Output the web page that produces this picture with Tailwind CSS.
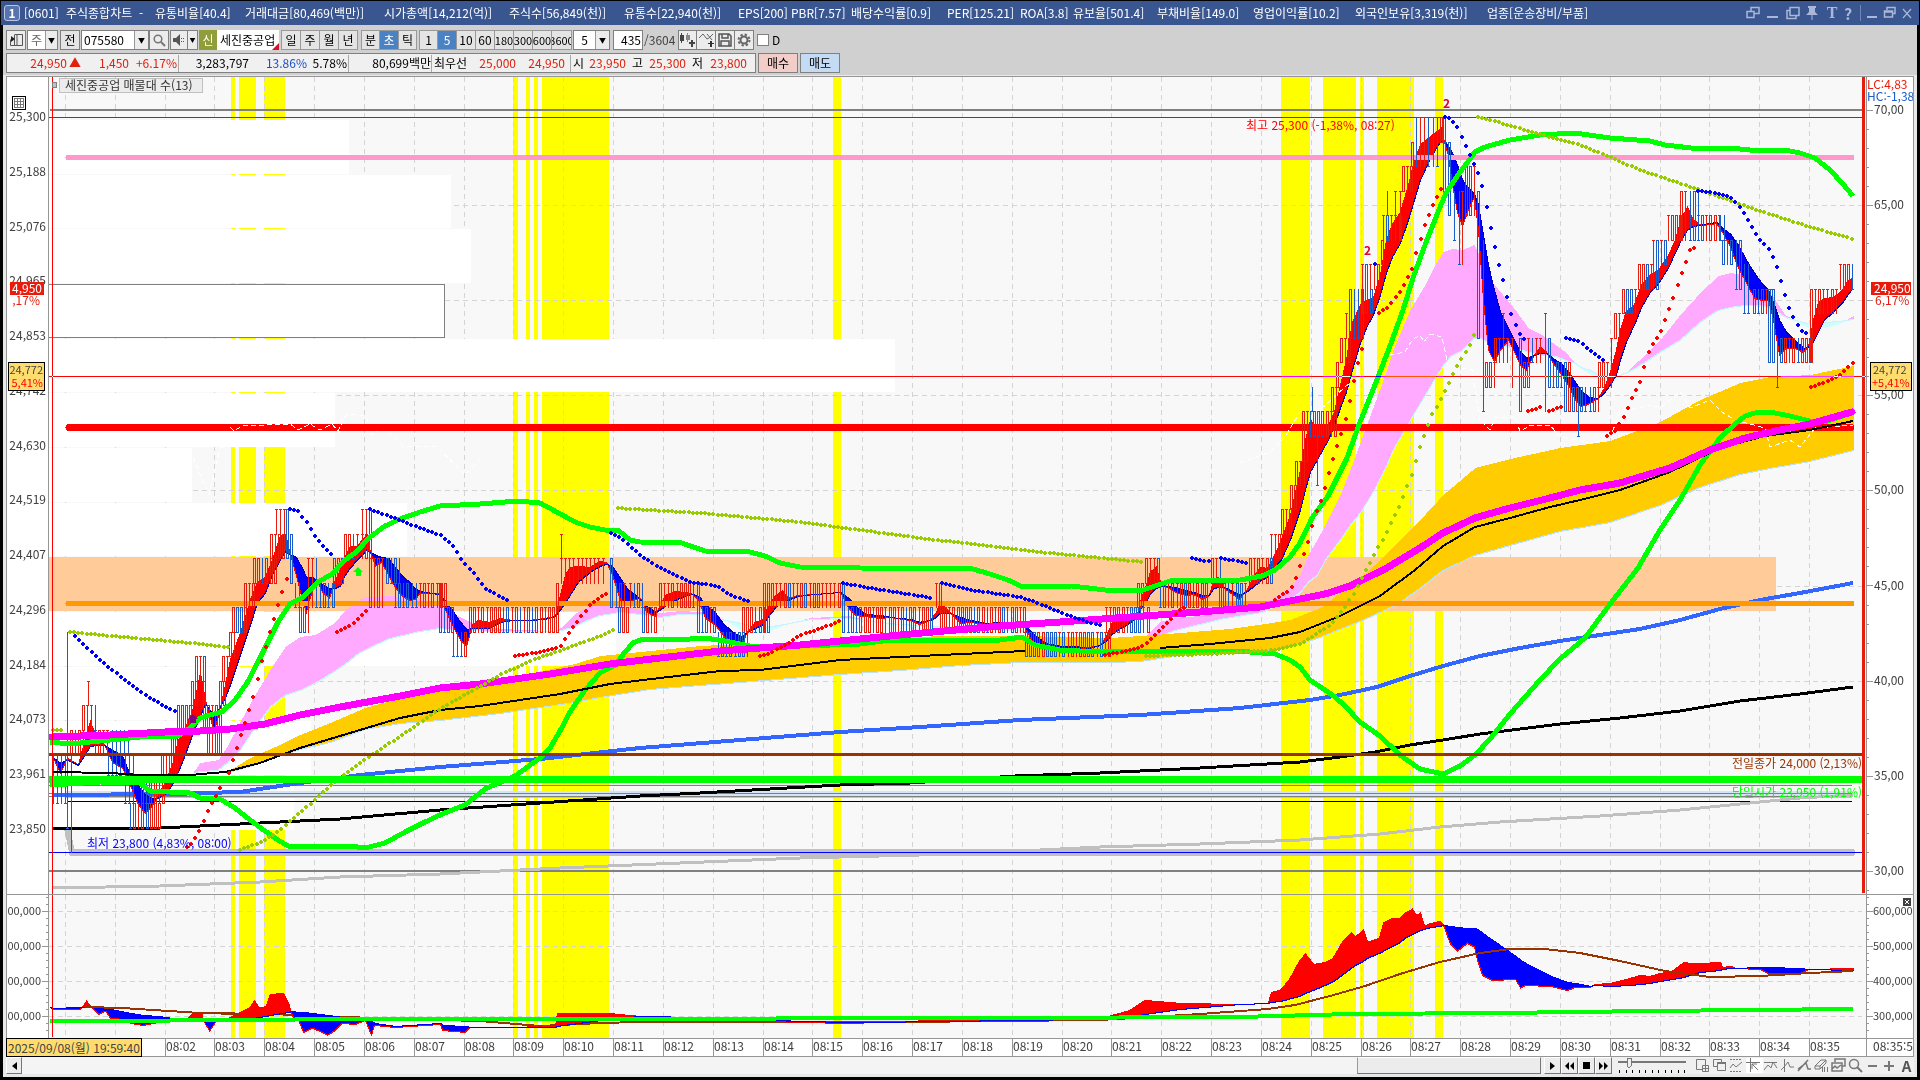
<!DOCTYPE html>
<html lang="ko">
<head>
<meta charset="utf-8">
<title>[0601] 주식종합차트</title>
<script src="https://cdn.jsdelivr.net/npm/@tailwindcss/browser@4"></script>
</head>
<body class="flex h-screen flex-col overflow-hidden bg-black pt-px font-['Noto_Sans_CJK_KR',sans-serif] text-xs leading-4 text-black">

<header class="mx-px flex h-6 shrink-0 items-center bg-[#3a5690] pl-[3px] text-white">
  <span class="flex size-4 items-center justify-center rounded-[3px] border border-[#b8c6e2] bg-[#5873ad] text-xs font-bold">1</span>
  <h1 class="ml-1 flex flex-1 overflow-hidden whitespace-nowrap">
    <span class="w-[42px] shrink-0">[0601]</span><span class="w-[89px] shrink-0">주식종합차트 &nbsp;-</span><span class="w-[90px] shrink-0">유통비율[40.4]</span><span class="w-[139px] shrink-0">거래대금[80,469(백만)]</span><span class="w-[125px] shrink-0">시가총액[14,212(억)]</span><span class="w-[115px] shrink-0">주식수[56,849(천)]</span><span class="w-[114px] shrink-0">유통수[22,940(천)]</span><span class="w-[53px] shrink-0">EPS[200]</span><span class="w-[60px] shrink-0">PBR[7.57]</span><span class="w-[96px] shrink-0">배당수익률[0.9]</span><span class="w-[73px] shrink-0">PER[125.21]</span><span class="w-[53px] shrink-0">ROA[3.8]</span><span class="w-[84px] shrink-0">유보율[501.4]</span><span class="w-24 shrink-0">부채비율[149.0]</span><span class="w-[102px] shrink-0">영업이익률[10.2]</span><span class="w-[132px] shrink-0">외국인보유[3,319(천)]</span><span class="shrink-0">업종[운송장비/부품]</span>
  </h1>
  <div class="flex shrink-0 items-center text-[#a9b8d8]">
    <button aria-label="분리" class="w-5"><svg width="14" height="14" viewBox="0 0 14 14" fill="none" stroke="currentColor" stroke-width="1.5"><path d="M5 1.500h8v6H5z"/><path d="M1 5.500h7v6H1z" fill="#3a5690"/></svg></button>
    <button aria-label="최소화 창" class="w-5"><svg width="14" height="14" viewBox="0 0 14 14" stroke="currentColor" stroke-width="2"><path d="M1 11h11"/></svg></button>
    <button aria-label="복사" class="w-5"><svg width="14" height="14" viewBox="0 0 14 14" fill="none" stroke="currentColor" stroke-width="1.5"><path d="M4 1.500h9v8H4zM4 4.500H1v8h9v-3"/></svg></button>
    <button aria-label="고정" class="w-[18px]"><svg width="12" height="14" viewBox="0 0 12 14" fill="currentColor"><path d="M2 0h8v2H9v4l3 3H0l3-3V2H2zM5.500 9h1v5h-1z"/></svg></button>
    <button aria-label="글꼴" class="w-4 font-['Liberation_Serif',serif] text-base font-bold">T</button>
    <button aria-label="도움말" class="w-4 text-base font-bold">?</button>
    <span class="mx-1 h-4 w-px bg-[#7086b4]"></span>
    <button aria-label="최소화" class="w-[18px]"><svg width="14" height="14" viewBox="0 0 14 14" stroke="currentColor" stroke-width="2"><path d="M2 11h10"/></svg></button>
    <button aria-label="이전 크기" class="w-[18px]"><svg width="14" height="14" viewBox="0 0 14 14" fill="none" stroke="currentColor" stroke-width="1.500"><path d="M4 4V1.500h8v6H9M1.500 5h8v6h-8zM1.500 6h8"/></svg></button>
    <button aria-label="닫기" class="w-[18px]"><svg width="12" height="14" viewBox="0 0 12 14" stroke="currentColor" stroke-width="1.200"><path d="M2 3l8 9M10 3l-8 9"/></svg></button>
  </div>
</header>

<main class="mx-[3px] mb-[3px] flex min-h-0 flex-1 flex-col bg-[#d0d0d0]">
  <section class="flex shrink-0 flex-col gap-[3px] px-[3px] pt-[5px] pb-[2px]">
    <div class="flex h-5 items-stretch whitespace-nowrap">
      <button aria-label="목록" class="flex w-5 items-center justify-center border border-[#808080] bg-[#ececec]"><svg width="13" height="12" viewBox="0 0 13 12" fill="none" stroke="#555"><path d="M4.500 .5h8v11h-12v-6"/><path d="M4.500 1v10M7 1v10" /><path d="M1 2l4 3-4 3z" fill="#222" stroke="none"/></svg></button>
      <div class="ml-px flex w-[31px] border border-[#808080] bg-white"><span class="flex-1 pt-px text-center text-[#666]">주</span><button aria-label="종목 구분" class="w-3 border-l border-[#999] bg-[#ececec] text-[7px]">▼</button></div>
      <button class="ml-[2px] w-5 border border-[#808080] bg-[#e4e4e4]">전</button>
      <div class="ml-px flex w-[68px] border border-[#808080] bg-white"><input aria-label="종목코드" value="075580" class="w-0 flex-1 pl-[2px] outline-none"><button aria-label="최근 종목" class="w-[14px] border-l border-[#999] bg-[#ececec] text-[7px]">▼</button></div>
      <button aria-label="종목 검색" class="flex w-5 items-center justify-center border border-[#808080] bg-[#ececec]"><svg width="13" height="13" viewBox="0 0 13 13" fill="none" stroke="#777" stroke-width="1.500"><circle cx="5" cy="5" r="3.800"/><path d="M8 8l4 4" stroke-width="2"/></svg></button>
      <button aria-label="소리" class="ml-px flex w-[18px] items-center justify-center border border-[#808080] bg-[#ececec]"><svg width="12" height="12" viewBox="0 0 12 12" fill="#555"><path d="M0 4h3l4-4v12L3 8H0z"/><path d="M8 4h1v1H8zM8 7h1v1H8zM10 4h1v1h-1zM10 7h1v1h-1z"/></svg></button>
      <button aria-label="소리 설정" class="w-[10px] border border-l-0 border-[#808080] bg-[#ececec] text-[6px]">▼</button>
      <div class="relative ml-px flex w-20 overflow-hidden bg-white"><span class="w-[18px] shrink-0 bg-[#8f9e3a] pt-[2px] text-center text-white">신</span><span class="pt-[2px] pl-[3px]">세진중공업</span><svg class="absolute right-0 bottom-0" width="7" height="7"><path d="M7 0v7H0z" fill="#d8102a"/></svg></div>
      <div class="ml-[2px] flex border-l border-[#999]"><button class="w-[19px] border border-l-0 border-[#999] bg-[#e4e4e4]">일</button><button class="w-[19px] border border-l-0 border-[#999] bg-[#e4e4e4]">주</button><button class="w-[19px] border border-l-0 border-[#999] bg-[#e4e4e4]">월</button><button class="w-[19px] border border-l-0 border-[#999] bg-[#e4e4e4]">년</button></div>
      <div class="ml-[3px] flex border-l border-[#999]"><button class="w-[18px] border border-l-0 border-[#999] bg-[#e4e4e4]">분</button><button aria-pressed="true" class="w-[19px] border border-l-0 border-[#999] bg-[#4a82c4] text-white">초</button><button class="w-[18px] border border-l-0 border-[#999] bg-[#e4e4e4]">틱</button></div>
      <div class="ml-[2px] flex border-l border-[#999]"><button class="w-[18px] border border-l-0 border-[#999] bg-[#e4e4e4]">1</button><button aria-pressed="true" class="w-[19px] border border-l-0 border-[#999] bg-[#4a82c4] text-white">5</button><button class="w-[19px] border border-l-0 border-[#999] bg-[#e4e4e4]">10</button><button class="w-[19px] border border-l-0 border-[#999] bg-[#e4e4e4]">60</button><button class="flex w-[19px] items-center justify-center border border-l-0 border-[#999] bg-[#e4e4e4] text-[11px]">180</button><button class="flex w-[19px] items-center justify-center border border-l-0 border-[#999] bg-[#e4e4e4] text-[11px]">300</button><button class="flex w-[19px] items-center justify-center border border-l-0 border-[#999] bg-[#e4e4e4] text-[11px]">600</button><button class="flex w-5 items-center justify-center overflow-hidden border border-l-0 border-[#999] bg-[#e4e4e4] text-[11px]">3600</button></div>
      <div class="ml-px flex w-[37px] border border-[#808080] bg-white"><span class="flex-1 pt-px text-center">5</span><button aria-label="주기" class="w-[14px] border-l border-[#999] bg-[#ececec] text-[7px]">▼</button></div>
      <input aria-label="봉 개수" value="435" class="ml-[3px] w-[30px] border border-[#808080] bg-white pr-px text-right outline-none">
      <span class="ml-px w-[34px] shrink-0 pt-[2px] text-[#444]">/3604</span>
      <button aria-label="지표 추가" class="flex w-[19px] items-center justify-center border border-[#808080] bg-[#ececec]"><svg width="15" height="14" viewBox="0 0 15 14" fill="#444"><path d="M0 2h1V0h1v2h2v6H2v2H1V8H0z"/><path fill="#888" d="M6 2h1V0h1v2h2v5H8v2H7V7H6z"/><path d="M11 7h2v2h2v2h-2v3h-2v-3H9V9h2z"/></svg></button>
      <button aria-label="비교 추가" class="flex w-[19px] items-center justify-center border border-l-0 border-[#808080] bg-[#ececec]"><svg width="15" height="14" viewBox="0 0 15 14" fill="none" stroke="#666"><path d="M0 5l4-4 4 5 2-1 4-4M8 1l5 6"/><path d="M11 8h2v2h2v1h-2v3h-2v-3H9v-1h2z" fill="#333" stroke="none"/></svg></button>
      <button aria-label="저장" class="flex w-[19px] items-center justify-center border border-l-0 border-[#808080] bg-[#ececec]"><svg width="14" height="14" viewBox="0 0 14 14" fill="none" stroke="#555" stroke-width="1.500"><path d="M1 1h10l2 2v10H1zM4 1v4h6V1M3 13V8h8v5"/></svg></button>
      <button aria-label="설정" class="flex w-[19px] items-center justify-center border border-l-0 border-[#808080] bg-[#ececec]"><svg width="14" height="14" viewBox="0 0 14 14" fill="none" stroke="#666"><circle cx="7" cy="7" r="3.500" stroke-width="2"/><circle cx="7" cy="7" r="5.500" stroke-width="2" stroke-dasharray="2.300 2.020"/></svg></button>
      <label class="ml-[3px] flex items-center gap-[3px]"><input type="checkbox" class="size-3 appearance-none border border-[#808080] bg-white">D</label>
    </div>
    <div class="flex h-5 items-stretch whitespace-nowrap text-[#e0200c]">
      <div class="flex w-[750px] border border-[#808080] bg-[#f0f0f0] pt-px">
        <span class="w-[60px] text-right">24,950</span><span class="w-4 pl-[2px] text-xs">▲</span><span class="w-[46px] text-right">1,450</span><span class="w-[50px] border-r border-[#aaa] pr-px text-right">+6.17%</span>
        <span class="w-[70px] text-right text-black">3,283,797</span><span class="w-[58px] text-right text-[#1c50c8]">13.86%</span><span class="w-[42px] border-r border-[#aaa] pr-px text-right text-black">5.78%</span>
        <span class="w-[83px] border-r border-[#aaa] text-right text-black">80,699백만</span><span class="w-9 pl-[2px] text-black">최우선</span>
        <span class="w-12 text-right">25,000</span><span class="w-[55px] border-r border-[#aaa] pr-[5px] text-right">24,950</span><span class="w-4 pl-[2px] text-black">시</span><span class="w-[39px] text-right">23,950</span><span class="w-[21px] pl-[6px] text-black">고</span><span class="w-[39px] text-right">25,300</span><span class="w-[21px] pl-[6px] text-black">저</span><span class="w-10 text-right">23,800</span>
      </div>
      <button class="ml-[2px] w-10 border border-[#808080] bg-[#f3cdc8] text-black">매수</button>
      <button class="ml-[2px] w-10 border border-[#808080] bg-[#c3dbf3] text-black">매도</button>
    </div>
  </section>

  <section class="flex min-h-0 flex-1 flex-col bg-[#e8e8e8] px-[3px] pt-px pb-[3px]">
    <div class="grid min-h-0 flex-1 grid-cols-[42px_1fr_47px] grid-rows-[minmax(0,1fr)_144px_18px] border border-[#969696] bg-white">
      <svg id="axisL" class="block h-full w-full overflow-hidden border-r border-[#969696]" viewBox="7 77 41 817" preserveAspectRatio="none"></svg>
      <svg id="price" class="block h-full w-full overflow-hidden bg-[#f8f8f8]" viewBox="49 77 1817 817" preserveAspectRatio="none"></svg>
      <svg id="axisR" class="block h-full w-full overflow-hidden border-l border-[#969696]" viewBox="1867 77 46 817" preserveAspectRatio="none"></svg>
      <svg id="volL" class="block h-full w-full overflow-hidden border-t border-r border-[#969696]" viewBox="7 895 41 143" preserveAspectRatio="none"></svg>
      <svg id="vol" class="block h-full w-full overflow-hidden border-t border-[#969696] bg-[#f8f8f8]" viewBox="49 895 1817 143" preserveAspectRatio="none"></svg>
      <svg id="volR" class="block h-full w-full overflow-hidden border-t border-l border-[#969696]" viewBox="1867 895 46 143" preserveAspectRatio="none"></svg>
      <div class="relative col-span-3 border-t border-[#969696]">
        <svg id="time" class="block h-full w-full overflow-hidden" viewBox="7 1039 1906 17" preserveAspectRatio="none"></svg>
        <output class="absolute -top-px -left-px flex h-[19px] w-[136px] items-center border border-black bg-[#ffdc6e] pl-px whitespace-nowrap text-[#444]">2025/09/08(월) 19:59:40</output>
      </div>
    </div>

    <div class="flex h-[17px] shrink-0 items-stretch bg-[#f0f0f0]">
      <button aria-label="왼쪽으로" class="flex w-4 items-center justify-center border border-t-white border-r-[#777] border-b-[#777] border-l-white bg-[#ececec]"><svg width="5" height="8"><path d="M5 0v8L0 4z"/></svg></button>
      <div class="flex flex-1 justify-end bg-[#f4f4f4]"><div class="w-[184px] border border-t-white border-r-[#777] border-b-[#777] border-l-[#999] bg-[#ececec]"></div></div>
      <div class="ml-[3px] flex">
        <button aria-label="재생" class="flex w-[17px] items-center justify-center border border-t-white border-r-[#777] border-b-[#777] border-l-white bg-[#ececec]"><svg width="5" height="8"><path d="M0 0v8l5-4z"/></svg></button>
        <button aria-label="뒤로" class="flex w-[17px] items-center justify-center border border-t-white border-r-[#777] border-b-[#777] border-l-white bg-[#ececec]"><svg width="9" height="8"><path d="M4 0v8L0 4zM9 0v8L5 4z"/></svg></button>
        <button aria-label="정지" class="flex w-[17px] items-center justify-center border border-t-white border-r-[#777] border-b-[#777] border-l-white bg-[#ececec]"><svg width="7" height="7"><path d="M0 0h7v7H0z"/></svg></button>
        <button aria-label="앞으로" class="flex w-[17px] items-center justify-center border border-t-white border-r-[#777] border-b-[#777] border-l-white bg-[#ececec]"><svg width="9" height="8"><path d="M0 0v8l4-4zM5 0v8l4-4z"/></svg></button>
      </div>
      <svg class="mr-2 ml-[5px]" width="70" height="17" shape-rendering="crispEdges" fill="#777"><path d="M1 4h68v2H1z"/><path d="M10 1h4v8l-2 2-2-2z" fill="#eee" stroke="#777"/><path fill="#000" d="M2 13h1v3H2zM9 13h1v3H9zM15 13h1v3h-1zM22 13h1v3h-1zM28 13h1v3h-1zM35 13h1v3h-1zM41 13h1v3h-1zM48 13h1v3h-1zM54 13h1v3h-1zM61 13h1v3h-1zM67 13h1v3h-1z"/></svg>
      <div class="flex items-center text-[#777]">
        <button aria-label="추가" class="w-[17px]"><svg width="15" height="15" viewBox="0 0 15 15" fill="none" stroke="currentColor"><path d="M8 11.500H1.500v-10h9V7"/><path d="M7.500 7.500h6v6h-6zM10.500 7.500v6M7.500 10.500h6"/></svg></button>
        <button aria-label="복제" class="w-[17px]"><svg width="15" height="15" viewBox="0 0 15 15" fill="none" stroke="currentColor"><path d="M5 8.500H1.500v-7h8V4M5.500 4.500h8v8h-8z"/><path d="M5 5h9" stroke-width="2"/></svg></button>
        <button aria-label="영역" class="w-[17px]"><svg width="15" height="15" viewBox="0 0 15 15" fill="none" stroke="currentColor"><path d="M1 1.500h12M1 13.500h12" stroke-dasharray="2 1"/><path d="M1 10l3-4 3 3 6-5"/></svg></button>
        <button aria-label="십자선" aria-pressed="true" class="w-[17px] bg-white"><svg width="15" height="15" viewBox="0 0 15 15" fill="none" stroke="currentColor"><path d="M4.500 0v14M0 4.500h14M6 6l6 6M6 6v5M6 6h5"/></svg></button>
        <button aria-label="수평선" class="w-[17px]"><svg width="15" height="15" viewBox="0 0 15 15" fill="none" stroke="currentColor"><path d="M1 4.500h13M1 12l4-5 3 3 2-6 4 6"/></svg></button>
        <button aria-label="수직선" class="w-[17px]"><svg width="15" height="15" viewBox="0 0 15 15" fill="none" stroke="currentColor"><path d="M4.500 1v13M1 12l3-3 4-5 2 5 4 0"/></svg></button>
        <button aria-label="추세선" class="w-[17px]"><svg width="15" height="15" viewBox="0 0 15 15" fill="none" stroke="currentColor"><path d="M1 13L11 2M1 11l4-3 4-3 2 6 3 0" stroke-width="1.500"/></svg></button>
        <button aria-label="지우개" class="w-[17px]"><svg width="15" height="15" viewBox="0 0 15 15" fill="none" stroke="currentColor"><path d="M1 8l6-6h5v3l-6 6H1zM1 8h5l6-6M6 8v3M8.500 9v5M10.500 9v5M13.500 9v5"/></svg></button>
        <button aria-label="차트 겹침" class="w-[17px]"><svg width="15" height="15" viewBox="0 0 15 15" fill="none" stroke="currentColor" stroke-width="1.500"><path d="M4 4V1h10v7h-3M1 5h10v8H1zM1 11l3-3 2 2 4-3"/></svg></button>
        <button aria-label="확대경" class="w-[17px]"><svg width="15" height="15" viewBox="0 0 15 15" fill="none" stroke="currentColor" stroke-width="1.500"><circle cx="6" cy="6" r="4.500"/><path d="M9 9l5 5" stroke-width="2"/></svg></button>
        <button aria-label="축소" class="w-[17px]"><svg width="15" height="15" viewBox="0 0 15 15" stroke="currentColor" stroke-width="2"><path d="M3 8h9"/></svg></button>
        <button aria-label="확대" class="w-[17px]"><svg width="15" height="15" viewBox="0 0 15 15" stroke="currentColor" stroke-width="2"><path d="M2 8h10M7 3v10"/></svg></button>
        <button aria-label="자동" class="w-[15px] text-[15px] font-bold text-[#555]">A</button>
      </div>
    </div>
  </section>
</main>

<script>
const NS = 'http://www.w3.org/2000/svg';
const $ = id => document.getElementById(id);
function add(svg, tag, attrs, text) {
  const e = document.createElementNS(NS, tag);
  for (const k in attrs) e.setAttribute(k, attrs[k]);
  if (text !== undefined) e.textContent = text;
  svg.appendChild(e);
  return e;
}
const nums = s => s.trim().split(/\s+/).map(t => t.split(/[:,]/).map(Number));
const box = (svg, x1, y1, x2, y2, fill, o = {}) => add(svg, 'rect', Object.assign({x: x1, y: y1, width: x2 - x1, height: y2 - y1, fill, 'shape-rendering': 'crispEdges'}, o));
const label = (svg, x, y, s, fill, o = {}) => add(svg, 'text', Object.assign({x, y, fill, 'font-size': 12}, o), s);
const line = (svg, s, stroke, w, o = {}) => add(svg, 'polyline', Object.assign({points: nums(s).map(p => p.join(',')).join(' '), fill: 'none', stroke, 'stroke-width': w, 'shape-rendering': 'crispEdges'}, o));
function at(pts, x, k) {
  let i = 1;
  while (i < pts.length - 1 && pts[i][0] < x) i++;
  const a = pts[i - 1], b = pts[i];
  return a[k] + (b[k] - a[k]) * (x - a[0]) / (b[0] - a[0]);
}
// Area between a fast and a slow curve, coloured by which of them is on top
function cloud(svg, s, up, down, edges) {
  const pts = nums(s), d = {up: '', down: ''};
  let fast = '', slow = '';
  for (let x = pts[0][0]; x <= pts[pts.length - 1][0]; x++) {
    const f = Math.round(at(pts, x, 1)), g = Math.round(at(pts, x, 2));
    fast += `${x + .5},${f} `; slow += `${x + .5},${g} `;
    if (f === g) continue;
    d[f < g ? 'up' : 'down'] += `M${x} ${Math.min(f, g)}h1V${Math.max(f, g)}h-1z`;
  }
  add(svg, 'path', {d: d.up, fill: up, 'shape-rendering': 'crispEdges'});
  add(svg, 'path', {d: d.down, fill: down, 'shape-rendering': 'crispEdges'});
  if (edges[0]) add(svg, 'polyline', {points: fast, fill: 'none', stroke: edges[0], 'shape-rendering': 'crispEdges'});
  if (edges[1]) add(svg, 'polyline', {points: slow, fill: 'none', stroke: edges[1], 'shape-rendering': 'crispEdges'});
}
function dots(svg, s, fill) {
  const pts = nums(s);
  let d = '';
  for (let x = pts[0][0]; x <= pts[pts.length - 1][0]; x += 4.15) {
    const X = Math.round(x), Y = Math.round(at(pts, x, 1));
    d += `M${X - 1} ${Y - 2}h2v1h1v2h-1v1h-2v-1h-1v-2h1z`;
  }
  add(svg, 'path', {d, fill, 'shape-rendering': 'crispEdges'});
}

const bands = [[231,235],[239,256],[264,285],[513,518],[526,530],[534,538],[542,609],[833,841],[1281,1310],[1323,1356],[1360,1364],[1377,1414],[1435,1443]];
const gridX = [...Array(36)].map((_, i) => Math.round(65 + 49.83 * i));
function backdrop(svg, y1, y2, rows) {
  bands.forEach(b => box(svg, b[0], y1, b[1], y2, '#ffff00'));
  gridX.forEach(x => add(svg, 'path', {d: `M${x + .5} ${y1}V${y2}`, stroke: '#d4d4d4', 'stroke-dasharray': '5 4', 'shape-rendering': 'crispEdges'}));
  rows.forEach(y => add(svg, 'path', {d: `M49 ${y + .5}H1862`, stroke: '#d4d4d4', 'stroke-dasharray': '5 4', 'shape-rendering': 'crispEdges'}));
}

/* ---- price pane ---- */
const P = $('price');
backdrop(P, 77, 894, [205, 300, 395, 490, 586, 681, 776]);
[[120,174,349],[175,228,451],[229,283,471],[284,338,445],[339,392,895],[393,447,335],[448,502,192],[503,556,407],[612,666,616],[667,720,264],[721,775,311],[776,830,294]].forEach(r => box(P, 49, r[0], r[2], r[1], '#ffffff'));
add(P, 'path', {d: 'M49 284.5H444.5V337.500H49', fill: 'none', stroke: '#808080', 'shape-rendering': 'crispEdges'});
box(P, 49, 557, 1776, 611, '#ffcc99');

box(P, 50, 109, 1862, 111, '#808080');
box(P, 49, 117, 1862, 118, '#ff0000');

const red = '#e81c0c', blue = '#1a5cc8';
box(P, 66, 791, 1852, 798, '#d4e4f4');
box(P, 66, 797, 1852, 798, '#99ccff');
box(P, 49, 785, 1852, 786, '#808080');
box(P, 49, 793, 1852, 794, '#808080');
box(P, 49, 796, 1852, 797, '#808080');
box(P, 68, 801, 1852, 802, '#000000');
line(P, '67:828 72:852', '#c0c0c0', 6);
line(P, '72:852.500 1852:852.500', '#c0c0c0', 7, {'stroke-linecap': 'round'});
box(P, 49, 870, 1862, 872, '#808080');

const orange = '225:773,773 232:769,771 250:758,766 275:747,757 300:735,749 330:723,742 365:708,729 400:698,723 440:690,720 500:680,713 575:664,702 600:656,697 650:651,689 700:646,685 740:644,682 790:645,678 840:645,674 900:637,670 960:636,665 1020:636,662 1110:638,662 1140:636,661 1180:633,655 1230:629,652 1265:624,650 1290:620,647 1320:608,637 1340:593,629 1360:578,621 1380:560,612 1400:540,602 1420:520,588 1443:495,570 1475:468,555 1510:459,545 1560:448,531 1610:441,522 1660:422,505 1700:400,487 1740:383,474 1770:377,468 1810:375,461 1853:366,450';
const pink = '192:774,774 200:763,771 218:760,770 228:745,762 240:722,750 255:695,727 270:670,707 285:647,695 300:637,690 315:635,683 333:624,672 345:611,664 360:599,652 368:597,648 390:596,638 420:599,631 440:604,628 455:615,630 470:622,630 490:628,631 520:630,631 555:631,631 562:627,630 575:614,626 590:606,619 600:602,615 620:605,612 640:610,614 660:613,617 680:611,614 700:612,614 712:616,617 725:620,620 740:630,623 755:633,626 765:633,627 785:625,624 810:618,619 850:616,618 870:622,621 900:626,624 920:627,625 1030:632,631 1050:641,635 1070:647,637 1100:646,640 1115:644,643 1130:642,646 1144:638,642 1160:622,636 1175:618,630 1200:616,624 1225:612,618 1250:606,614 1262:604,612 1275:597,606 1290:588,600 1300:575,592 1308:555,582 1317:540,575 1325:525,560 1340:495,540 1350:470,525 1360:443,513 1374:405,490 1385:375,468 1393:350,450 1410:310,420 1425:285,395 1435:265,378 1443:252,365 1452:249,355 1462:250,350 1474:245,338 1480:257,338 1490:280,343 1500:292,345 1515:310,348 1528:328,352 1542:335,355 1555:345,356 1565:352,360 1573:361,362 1580:368,367 1590:375,370 1600:380,376 1610:384,376 1620:378,375 1632:367,370 1645:355,362 1660:340,352 1680:315,340 1700:293,322 1718:276,310 1730:273,307 1745:275,305 1760:285,305 1772:296,309 1785:315,317 1795:321,320 1810:329,324 1825:328,322 1840:324,321 1853:316,319';
cloud(P, pink, '#ffaaff', '#ccffff', [null, '#c8f4ff']);
cloud(P, orange, '#ffcc00', '#ffcc00', [null, '#c0e0f4']);
line(P, '190:450 209:495 220:448 288:424 300:440 316:424 335:430 347:414 366:416 372:435 384:427 403:446 438:447 465:475 480:460', '#ffffff', 1, {'stroke-dasharray': '5 3'});

line(P, '52:888 160:886 260:882 340:877 440:874 560:868 680:863 800:858 920:855 1000:852 1100:847 1200:844 1300:840 1340:837 1380:834 1440:827 1500:822 1600:816 1680:810 1760:802 1800:798 1853:795', '#c0c0c0', 3);
box(P, 49, 852, 1862, 853, '#0000ff');
line(P, '52:828 160:828 240:824 340:819 440:810 540:803 640:796 700:793 840:785 910:783 1015:776 1100:773 1200:768 1300:762 1340:757 1375:752 1410:745 1443:740 1480:734 1560:724 1620:718 1680:711 1740:701 1800:694 1853:687', '#000000', 3);
line(P, '52:795 170:794 240:792 300:783 360:775 440:767 540:759 640:748 740:740 840:732 920:727 1020:720 1140:715 1240:708 1310:700 1340:695 1377:687 1410:676 1443:666 1480:656 1520:648 1560:641 1600:635 1640:629 1680:620 1720:609 1760:600 1800:593 1853:583', '#3366ff', 4);

/* candles: start x, top, bottom, one letter a bar (capital: body, small: doji) */
const candles = `53,755,803,rbrb 67,632,828,b 71,755,852,r 71,730,755,RbRr 83,705,730,Rrrb 88,681,705,r 95,730,755,bRrrbbbbb 108,755,775,bbbb
125,755,803,bbb 130,803,828,bRrRBRRR 142,775,803,RbR 155,775,803,RrR 162,755,775,RrR 172,730,775,BB 178,705,730,RBRB 192,681,705,RR 196,656,681,RrB 204,656,730,B 208,705,753,BrRR 220,681,705,RR 223,656,681,Rr 230,632,656,Rr 233,607,632,RBBR 245,583,607,RrR 254,558,583,RRbBRR 271,534,558,RrRR 276,509,534,rrr 287,509,558,B 291,534,583,B 295,583,607,bb 300,607,632,BBr 308,558,607,rrb 316,583,607,bbBbB 334,558,583,BRB 345,534,558,RRbrrRR 362,509,534,rr 370,509,607,B 374,558,607,rRr 387,558,583,BbBb 395,583,607,bBbBbbrRrRrRR 440,583,632,B 444,607,632,bBR 453,632,656,bbbR 470,607,632,RRrRrRRRbBrBbrBbRRrRRR
557,583,632,R 561,558,583,rrrrrrrrrrr 561,534,558,r 611,558,607,B 616,583,607,bBr 619,607,632,BRR 630,583,607,rbBb 643,607,632,BRrR 660,583,607,RrrRrRRRb 698,583,632,B 702,607,632,bBrB 718,632,656,bBbBbBBr 743,607,632,RRRbBrB 764,583,632,R 768,583,607,BRrrRBrrRBrBRrrrrR 843,583,632,B 848,607,632,bBbRRRrRRrRRrBbRRrRRB
936,583,607,rR 941,607,632,RRrRBBBRbBRbRrRBrBRrR 1026,632,656,BBBRRBBBrBrRrRRBBrBrR 1106,607,632,rrRRRrBBBrR 1138,583,607,RR 1146,558,583,RrrB 1160,583,607,bRrBrRBRbRBB 1212,558,583,Rrb 1220,583,607,BRbrBBr 1250,558,583,RrRrRB 1271,534,558,rrR 1282,509,534,RrR 1291,485,509,RR 1296,461,485,Rrr 1303,411,461,Rr
1310,411,436,bBBBRrR 1312,387,411,b 1317,436,485,b 1332,387,411,Rr 1337,362,387,R 1341,338,362,RrR 1346,313,338,r 1350,289,338,RbbR 1362,264,313,r 1366,264,313,Br 1371,289,313,B 1374,264,289,rR 1382,240,264,R 1383,215,240,rBrrR 1387,191,215,b 1395,191,240,r 1400,191,240,r 1403,166,191,RrR 1412,142,166,R 1416,117,166,brrbrb 1437,117,142,rRb 1444,117,191,B 1449,142,215,B 1454,191,240,b 1459,191,264,b 1462,191,264,r 1466,166,215,RBr 1478,191,338,B 1483,240,411,b 1486,362,387,RBr 1495,338,362,Rrrr 1503,313,338,r 1512,338,387,r 1520,338,411,B 1524,362,387,RR 1528,338,362,rbrr 1545,313,411,r 1549,338,387,B 1553,362,387,bBb 1565,362,411,BR
1573,387,411,BRBb 1578,387,436,b 1590,387,411,bRr 1599,362,387,RRr 1611,338,387,r 1615,313,338,Rr 1623,289,313,RBBr 1639,264,289,RRBr 1653,240,289,rB 1661,240,264,rB 1668,215,240,rRRR 1681,191,240,Rr 1690,191,240,bBb 1698,215,240,rBrRRr 1720,215,240,bb 1723,240,264,BrB 1736,240,289,bB 1744,264,313,bb 1754,289,313,BbRrR 1769,289,362,BB 1777,338,387,b 1781,338,362,BRrRbRRB 1811,289,362,R 1815,289,313,rRrrRr 1840,264,289,rRRb`;
let rd = '', bd = '';
candles.trim().split(/\s+/).forEach(t => {
  const [x0, top, bot, pat] = t.split(',');
  [...pat].forEach((c, i) => {
    const x = Math.round(+x0 + 4.15 * i), y = +top, h = bot - top;
    let d;
    if (c === 'R' || c === 'B') d = `M${x - .5} ${y + .5}h2v${h}h-2z`;
    else d = `M${x + .5} ${y}v${h + 1}M${x - 1} ${(c === 'r' ? y : +bot) + .5}h3`;
    if (c === 'R' || c === 'r') rd += d; else bd += d;
  });
});

const ma = '52:756,757 60:773,763 67:758,760 78:765,765 85:738,755 90:722,746 97:740,745 104:745,745 112:762,750 122:768,756 130:785,775 138:805,786 145:813,795 152:806,798 158:795,798 165:782,794 172:765,785 178:740,772 185:727,755 192:712,735 200:673,716 205:700,704 211:722,712 214:730,712 218:716,710 224:690,700 230:660,685 240:633,655 250:600,625 257:582,603 265:577,593 272:560,575 280:536,560 285:534,552 290:555,555 295:572,556 302:600,568 306:612,577 312:590,577 316:580,580 322:592,585 329:598,588 335:580,588 340:570,586 345:556,575 350:546,568 357:546,560 362:540,555 366:535,550 370:552,552 375:566,555 381:562,557 388:575,558 395:588,568 403:597,577 410:600,583 415:599,589 420:593,591 438:593,594 444:608,600 452:625,610 460:640,622 466:646,629 472:625,628 478:620,628 490:622,628 500:618,622 512:620,620 530:620,620 545:618,619 555:616,616 560:595,610 565:575,603 570:567,595 578:566,582 590:567,572 600:561,566 606:562,564 612:575,566 620:600,578 628:603,590 634:599,594 640:598,600 646:612,606 655:616,612 660:605,610 665:595,606 675:591,600 685:592,596 692:594,594 698:600,596 705:618,604 715:625,613 724:637,625 735:643,634 742:643,637 747:632,632 755:622,628 762:620,625 768:605,617 775:596,608 782:591,602 788:598,600 798:595,596 815:594,594 840:592,592 848:608,598 855:615,606 865:616,614 880:618,615 890:617,617 910:620,619 919:624,622 930:620,620 935:614,618 940:603,613 950:613,613 960:623,617 970:622,620 985:624,623 1000:622,622 1015:624,622 1024:627,624 1034:645,635 1045:646,643 1060:648,646 1075:650,646 1088:647,648 1100:645,645 1106:636,641 1112:622,634 1120:617,628 1128:620,624 1137:614,617 1141:598,608 1146:585,602 1150:572,594 1156:567,588 1160:582,586 1165:586,586 1175:592,587 1185:595,590 1193:594,592 1202:599,595 1209:595,595 1214:578,588 1218:577,587 1224:588,587 1232:594,591 1239:599,595 1246:591,592 1253:577,587 1260:567,581 1267:568,577 1271:562,571 1281:540,560 1290:515,540 1300:470,510 1305:440,490 1310:420,472 1318:430,458 1328:425,440 1334:412,425 1340:385,408 1346:360,392 1352:322,370 1360:305,343 1366:300,328 1373:298,315 1380:275,295 1386:240,273 1392:224,257 1400:212,243 1408:185,220 1414:160,200 1420:145,180 1428:138,163 1436:132,148 1441:128,141 1444:142,142 1448:155,146 1452:185,153 1457:212,165 1462:226,180 1467:212,187 1474:197,194 1478:230,205 1483:300,235 1488:350,265 1494:362,290 1500:350,312 1508:340,328 1514:352,340 1520:365,352 1526:370,358 1532:358,356 1540:347,353 1546:352,353 1552:362,358 1560:373,363 1568:385,372 1575:400,382 1580:406,390 1588:404,397 1598:398,398 1604:388,393 1610:372,385 1616:350,375 1620:330,360 1626:311,342 1634:305,325 1641:285,308 1650:275,292 1658:270,284 1668:255,268 1675:240,253 1681:218,240 1687:207,230 1693:220,226 1700:225,225 1710:224,223 1716:223,222 1722:232,228 1730:247,234 1738:268,245 1746:283,260 1754:298,273 1762:300,284 1768:300,290 1773:320,302 1779:355,320 1786:348,332 1794:348,340 1803:352,348 1808:347,347 1813:320,342 1818:303,332 1824:298,320 1834:297,311 1842:290,303 1848:280,294 1852:278,289';
cloud(P, ma, '#ff0000', '#0000ff', ['#ff0000', '#0000c0']);

line(P, '68:157.500 1852:157.500', '#ff99cc', 5, {'stroke-linecap': 'round'});
line(P, '69:427.500 1851:427.500', '#ff0000', 7, {'stroke-linecap': 'round'});
line(P, '68:603.500 1852:603.500', '#ff9900', 5, {'stroke-linecap': 'round'});
line(P, '1240:463 1270:452 1285:437 1300:412 1320:410 1345:387 1360:375 1375:380 1390:355 1405:352 1412:340 1420:335 1424:342 1430:334 1442:337 1448:365 1472:370 1480:420 1490:430 1495:417 1516:418 1520:432 1530:425 1550:425 1560:437 1580:440 1590:444 1610:438 1620:412 1650:405 1660:408 1680:392 1690:408 1710:400 1722:412 1735:420 1765:428 1770:447 1790:440 1800:447 1815:428 1853:425', '#ffffff', 1, {'stroke-dasharray': '5 3'});
line(P, '230:427 234:431 242:426 290:424 298:430 310:424 320:430 332:424 338:431 342:424', '#ffffff', 1, {'stroke-dasharray': '5 3'});
add(P, 'path', {d: rd, fill: 'none', stroke: red, 'shape-rendering': 'crispEdges'});
add(P, 'path', {d: bd, fill: 'none', stroke: blue, 'shape-rendering': 'crispEdges'});

line(P, '50:742 70:744 100:741 140:737 178:736 190:728 200:718 210:715 222:712 235:700 247:683 258:662 265:648 278:622 290:604 303:597 318:582 332:574 345:560 355:553 370:537 385:526 400:519 420:512 440:506 480:504 518:501 540:503 555:511 575:522 590:527 605:530 618:530 630:540 640:542 682:543 705:551 750:552 765:556 780:563 800:567 860:568 973:569 990:574 1008:580 1023:587 1072:586 1105:590 1140:591 1155:586 1170:581 1240:580 1262:576 1275:570 1290:557 1300:543 1312:518 1328:496 1347:458 1360:422 1375:385 1390:346 1403:310 1414:275 1425:245 1438:212 1446:193 1458:175 1475:152 1485:147 1510:140 1540:135 1575:133 1610:138 1650:141 1665:145 1700:149 1730:148 1760:151 1785:150 1800:153 1815:158 1830:170 1843:184 1853:196', '#00ff00', 5, {'stroke-linejoin': 'round'});
line(P, '50:785 100:782 140:783 150:791 190:793 200:798 220:799 235:808 250:820 265:831 278:840 288:846 350:846 365:848 385:843 405:832 425:822 440:815 465:805 485:789 515:776 540:758 550:748 560:731 570:712 585:690 600:673 615:665 625:652 633:643 643:639 690:639 705:638 725:641 750:646 800:646 860:644 890:640 960:640 1000:640 1022:637 1035:645 1060:650 1080:651 1250:652 1275:654 1290:660 1300:667 1310:680 1325:690 1335:697 1345:706 1360:722 1380:736 1400:755 1420:769 1443:774 1460:766 1475:755 1490:739 1510:714 1540:680 1560:659 1585:638 1610:604 1638:568 1660:530 1680:500 1700:465 1720:438 1735:424 1745:416 1755:413 1770:412 1790:416 1810:421 1828:421 1845:415 1853:412', '#00ff00', 5, {'stroke-linejoin': 'round'});
line(P, '52:772 110:773 140:775 190:775 225:772 260:763 300:748 350:733 400:718 440:710 480:706 560:694 610:684 660:678 720:671 760:670 840:660 920:656 1025:651', '#000000', 2);
line(P, '1160:648 1210:644 1270:638 1300:632 1340:616 1380:596 1415:570 1443:546 1475:527 1510:518 1550:507 1580:500 1620:490 1670:472 1720:448 1765:436 1810:430 1853:421', '#000000', 2);
line(P, '52:737 110:735 165:732 200:731 230:729 265:724 300:715 340:707 400:696 440:688 480:684 550:674 610:664 660:658 720:651 800:645 860:639 900:635 1000:626 1060:622 1130:617 1200:612 1260:607 1290:601 1325:594 1350:586 1385:569 1420:548 1443:533 1475:518 1510:508 1550:498 1580:490 1620:483 1670:468 1710:450 1745:438 1780:430 1810:424 1852:412', '#ff00ff', 7, {'stroke-linecap': 'round'});

['53:730 65:730', '70:632 100:635 190:643 228:647', '240:850 262:842 280:830 290:821 310:804 330:786 360:763 390:743 420:723 440:709 470:692 500:675 530:661 570:647 600:636 617:629', '618:508 700:513 800:522 920:538 1040:552 1143:562', '1146:656 1210:654 1275:650 1300:644 1310:638 1330:625 1345:607 1353:595 1365:572 1385:535 1400:505 1410:480 1420:447 1432:415 1443:395 1455:370 1470:345 1474:335', '1478:117 1490:120 1550:137 1580:145 1605:155 1640:170 1700:190 1760:211 1810:227 1853:239'].forEach(s => dots(P, s, '#99cc00'));
['75:636 100:660 125:680 150:698 176:712', '290:509 298:511 308:524 316:538 325:548 334:556', '370:509 380:513 400:520 420:528 440:535 452:544 460:557 475:575 485:588 508:601', '611:533 620:537 640:555 660:568 690:582 718:586 730:595 748:601', '843:583 870:588 900:593 932:598', '942:583 970:590 1020:597 1035:602 1050:608 1075:618 1102:626', '1192:558 1211:562', '1221:558 1247:563', '1375:264 1376:264', '1445:117 1450:118 1458:128 1466:147 1472:160 1478:172 1483:188 1487:210 1492:234 1497:258 1503:280 1508:300 1513:320 1520:335 1524:339', '1566:338 1578:341 1590:350 1604:360', '1698:191 1710:192 1730:197 1741:208 1750:224 1760:240 1770:250 1778:270 1784:291 1790:310 1800:330 1807:333'].forEach(s => dots(P, s, '#0000ff'));
['187:847 192:843 200:830 208:810 221:787 228:775 235:753 245:723 254:695 262:660 270:632 280:600 289:572', '337:632 350:626 367:610', '515:656 540:652 560:647 567:635 575:625 590:605 600:597 608:593', '760:656 770:653 790:642 800:635 825:627 841:620', '1105:655 1140:648 1150:640 1165:625 1180:610 1188:605', '1275:600 1290:590 1297:575 1302:560 1308:543 1315:515 1323:495 1331:465 1341:435 1348:410 1356:370 1363:346', '1379:313 1387:308 1400:292 1412:270 1417:250 1425:224 1432:207 1442:188', '1528:411 1542:407', '1549:411 1562:407', '1607:436 1615:431 1625:415 1632:398 1641:380 1649:350 1660:333 1668:313 1675:293 1681:275 1690:250 1695:247', '1811:387 1825:382 1840:375 1853:363'].forEach(s => dots(P, s, '#ff0000'));
add(P, 'path', {d: 'M358 567l5 5h-2v4h-5v-4h-3z', fill: '#00ff00'});
add(P, 'path', {d: 'M193 714l5 5h-2v4h-6v-4h-2z', fill: '#800080'});

box(P, 49, 753, 1862, 756, '#993300');
box(P, 49, 776, 1862, 783, '#00ff00');
label(P, 87, 848, '최저 23,800 (4,83%, 08:00)', '#0000ff');
label(P, 1246, 130, '최고 25,300 (-1,38%, 08:27)', '#ff0000');
label(P, 1732, 768, '전일종가 24,000 (2,13%)', '#993300');
label(P, 1732, 797, '당일시가 23,950 (1,91%)', '#00ff00');
label(P, 1443, 108, '2', '#e0002c', {'font-weight': 700});
label(P, 1364, 255, '2', '#e0002c', {'font-weight': 700});
box(P, 1862, 77, 1865, 893, '#e81c0c');
box(P, 52, 77, 53, 894, '#ff0000');
/* crosshair: inverts what it crosses */
box(P, 49, 376, 1866, 377, '#00ffff', {style: 'mix-blend-mode: difference'});
add(P, 'rect', {x: 52.5, y: 82.5, width: 4, height: 5, fill: '#c0c0c0', stroke: '#808080'});
add(P, 'rect', {x: 59.5, y: 78.5, width: 143, height: 14, fill: '#ececec', stroke: '#c0c0c0'});
label(P, 65, 90, '세진중공업 매물대 수(13)', '#333333');

/* ---- price axes ---- */
const L = $('axisL');
['25,300','25,188','25,076','24,965','24,853','24,742','24,630','24,519','24,407','24,296','24,184','24,073','23,961','23,850'].forEach((s, i) => label(L, 46, Math.round(121 + i * 54.75), s, '#404040', {'text-anchor': 'end'}));
add(L, 'rect', {x: 12.500, y: 96.500, width: 13, height: 13, fill: '#fff', stroke: '#000'});
add(L, 'path', {d: 'M14.500 98.500h9v9h-9zM17.500 98.500v9M20.500 98.500v9M14.500 101.500h9M14.500 104.500h9', fill: 'none', stroke: '#777', 'shape-rendering': 'crispEdges'});
box(L, 10, 282, 44, 295, '#e81c0c');
label(L, 42, 293, '4,950', '#ffffff', {'text-anchor': 'end'});
box(L, 10, 296, 44, 307, '#ffffff');
label(L, 40, 305, ',17%', '#e81c0c', {'text-anchor': 'end'});
add(L, 'rect', {x: 8.500, y: 362.500, width: 36, height: 28, fill: '#ffdc6e', stroke: '#000'});
label(L, 43, 374, '24,772', '#444', {'text-anchor': 'end', 'font-size': 11});
label(L, 43, 387, '5,41%', '#ff0000', {'text-anchor': 'end', 'font-size': 11});

const R = $('axisR');
for (let y = 110, i = 0; y < 890; y += 19.02, i++) box(R, 1867, Math.round(y), i % 5 ? 1869 : 1873, Math.round(y) + 1, '#969696');
['70,00','65,00','60,00','55,00','50,00','45,00','40,00','35,00','30,00'].forEach((s, i) => { if (i !== 2) label(R, 1874, Math.round(114 + i * 95.1), s, '#404040'); });
box(R, 1871, 282, 1911, 295, '#e81c0c');
label(R, 1874, 293, '24,950', '#ffffff');
label(R, 1875, 305, '6,17%', '#e81c0c');
add(R, 'rect', {x: 1870.500, y: 362.500, width: 41, height: 28, fill: '#ffdc6e', stroke: '#000'});
label(R, 1873, 374, '24,772', '#444', {'font-size': 11});
label(R, 1872, 387, '+5,41%', '#ff0000', {'font-size': 11});
label(R, 1867, 89, 'LC:4,83', '#e81c0c');
label(R, 1867, 101, 'HC:-1,38', '#1a5cc8');

/* ---- volume pane ---- */
const V = $('vol');
backdrop(V, 895, 1038, [911, 946, 981, 1016]);
line(V, '85:1007 122:1008 200:1013 270:1014 320:1016 400:1019 480:1021 540:1026 600:1023 640:1022 900:1022 1100:1020 1200:1014 1268:1009 1295:1005 1330:996 1365:986 1400:974 1440:962 1480:953', '#993300', 2);
cloud(V, '50:1007,1007 52:1009,1008 80:1009,1007 82:1007,1007 86:1001,1007 90:1006,1007 98:1014,1007 105:1011,1008 110:1018,1009 125:1019,1012 130:1023,1013 143:1025,1015 158:1022,1016 165:1021,1017 180:1019,1019 185:1020,1019 195:1012,1019 201:1012,1019 203:1020,1020 209:1031,1021 217:1019,1020 228:1018,1020 240:1012,1019 249:1008,1018 254:1001,1018 259:1008,1017 266:1006,1016 270:994,1015 283:993,1013 288:1003,1012 292:1016,1011 298:1020,1012 303:1032,1012 312:1028,1013 320:1031,1014 327:1035,1015 335:1030,1016 342:1023,1017 355:1024,1019 365:1020,1020 371:1035,1021 374:1025,1023 395:1027,1026 440:1024,1023 442:1030,1025 465:1032,1026 470:1027,1027 500:1027,1027 555:1026,1027 557:1013,1026 608:1013,1019 640:1016,1016 700:1019,1017 740:1020,1018 800:1022,1021 850:1023,1022 960:1019,1021 1000:1020,1020 1105:1017,1019 1130:1010,1017 1145:1000,1014 1180:1003,1009 1240:1004,1004 1268:1003,1003 1271:992,1002 1280:990,1001 1288:981,999 1299:961,996 1305:954,993 1313:964,990 1325:962,985 1332:959,982 1342:942,975 1351:933,968 1355:937,965 1363:930,961 1367:942,958 1379:938,953 1383:923,951 1392:918,946 1400:918,942 1405:913,938 1412:909,934 1416:915,932 1420:913,930 1424:926,929 1431:923,927 1439:921,926 1443:925,925 1450:944,926 1457:951,927 1467:943,928 1474:947,928 1477:960,929 1482:975,933 1492:980,940 1515:979,956 1520:988,960 1525:985,963 1550:986,976 1567:990,982 1575:987,983 1590:987,986 1595:984,985 1610:983,986 1630:978,985 1640:975,984 1650:976,983 1660:973,981 1672:971,979 1684:962,977 1690:963,975 1700:963,972 1720:962,970 1722:967,969 1730:966,968 1735:968,968 1760:969,967 1767:973,967 1800:973,968 1808:969,969 1853:968,970', '#ff0000', '#0000ff', ['#ff0000', '#0000ff']);
line(V, '85:1007 122:1008 200:1013 240:1014', '#993300', 2);
line(V, '1400:974 1440:962 1480:953 1510:949 1545:949 1580:953 1620:961 1665:971 1710:977 1760:976 1810:973 1853:971', '#993300', 2);
line(V, '50:1021 290:1020 300:1019 560:1019 1000:1018 1240:1017 1350:1014 1500:1013 1650:1011 1853:1009', '#00ff00', 4);
box(V, 52, 895, 53, 1037, '#ff0000');

const VL = $('volL'), VR = $('volR');
for (let i = -2; i < 18; i++) {
  const y = 911 + i * 7, major = i % 5 === 0;
  box(VL, major ? 42 : 46, y, 48, y + 1, '#969696');
  box(VR, 1867, y, major ? 1873 : 1869, y + 1, '#969696');
}
[600, 500, 400, 300].forEach((n, i) => {
  label(VL, 41, 915 + 35 * i, '00,000', '#404040', {'text-anchor': 'end', 'font-size': 11});
  label(VR, 1873, 915 + 35 * i, n + ',000', '#404040', {'font-size': 11});
});
box(VR, 1903, 898, 1911, 906, '#404040');
add(VR, 'path', {d: 'M1905 900l4 4M1909 900l-4 4', stroke: '#fff'});

/* ---- time axis ---- */
const T = $('time');
gridX.forEach((x, i) => {
  if (i < 2) return;
  box(T, x, 1039, x + 1, 1056, '#969696');
  label(T, x + 1, 1051, '08:' + String(i).padStart(2, '0'), '#404040');
});
box(T, 1866, 1039, 1867, 1056, '#969696');
label(T, 1873, 1051, '08:35:5', '#404040');
</script>
</body>
</html>
